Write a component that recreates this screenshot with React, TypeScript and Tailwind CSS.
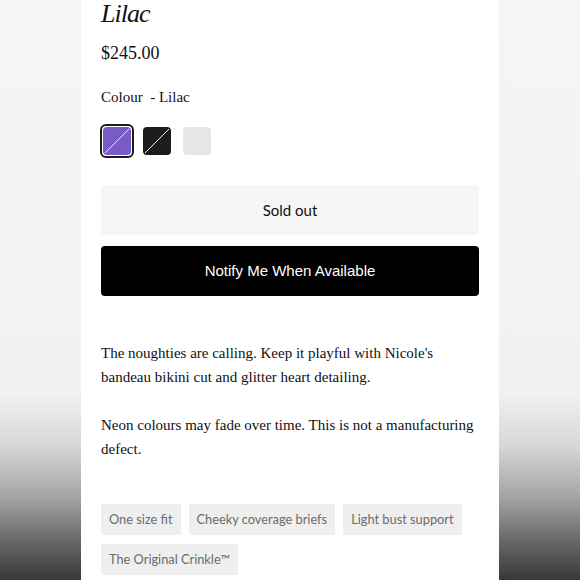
import React from "react";

const serif = { fontFamily: '"Liberation Serif", "DejaVu Serif", serif' };

function Swatch({ color, selected, slash }: { color: string; selected?: boolean; slash?: boolean }) {
  const inner = (
    <div className="relative h-[28px] w-[28px] overflow-hidden rounded-[4px]" style={{ backgroundColor: color }}>
      {slash ? (
        <svg className="absolute inset-0" width="28" height="28" viewBox="0 0 28 28">
          <line x1="2" y1="26" x2="26" y2="2" stroke="#e8e4f0" strokeWidth="1" />
        </svg>
      ) : null}
    </div>
  );
  if (selected) {
    return <div className="rounded-[6px] border-2 border-[#1c1c1c] p-[1px]">{inner}</div>;
  }
  return <div className="p-[3px]">{inner}</div>;
}

function Tag({ label }: { label: string }) {
  return (
    <span className="inline-flex h-[31px] items-center bg-[#efefef] px-[8px] font-['Lato',sans-serif] text-[12.8px] text-[#6b6b6b]">
      {label}
    </span>
  );
}

export default function App() {
  return (
    <div className="flex h-[580px] w-[580px] justify-center overflow-hidden bg-[linear-gradient(to_bottom,#f5f5f5_0%,#f1f1f1_68%,#d6d6d6_77%,#a2a2a2_86%,#6a6a6a_93%,#383838_100%)]">
      <div className="h-full w-[418px] bg-white px-5">
        <h1 className="-mt-[2px] text-[26px] italic leading-[32px] tracking-[-1px] text-[#111]" style={serif}>
          Lilac
        </h1>
        <div className="mt-[11px] text-[18px] leading-[24px] text-[#111]" style={serif}>
          $245.00
        </div>
        <div className="mt-[20px] text-[15px] leading-[24px] text-[#111]" style={serif}>
          Colour&nbsp; - Lilac
        </div>
        <div className="mt-[15px] flex items-center gap-[6px] -ml-[1px]">
          <Swatch color="#7a5cc6" selected slash />
          <Swatch color="#1c1c1c" slash />
          <Swatch color="#e6e6e6" />
        </div>
        <button className="mt-[27px] flex h-[50px] w-full items-center justify-center rounded-[4px] bg-[#f6f6f6] font-['Lato',sans-serif] text-[15px] text-[#111]">
          Sold out
        </button>
        <button className="mt-[11px] flex h-[50px] w-full items-center justify-center rounded-[4px] bg-black font-['Liberation_Sans',sans-serif] text-[15px] text-white">
          Notify Me When Available
        </button>
        <div className="mt-[45px] text-[15px] leading-[24px] text-[#111]" style={serif}>
          <p>
            The noughties are calling. Keep it playful with Nicole's bandeau bikini cut and glitter heart detailing.
          </p>
          <p className="mt-[24px]">Neon colours may fade over time. This is not a manufacturing defect.</p>
        </div>
        <div className="mt-[43px] flex flex-wrap gap-x-[8px] gap-y-[9px]">
          <Tag label="One size fit" />
          <Tag label="Cheeky coverage briefs" />
          <Tag label="Light bust support" />
          <Tag label="The Original Crinkle™" />
        </div>
      </div>
    </div>
  );
}
